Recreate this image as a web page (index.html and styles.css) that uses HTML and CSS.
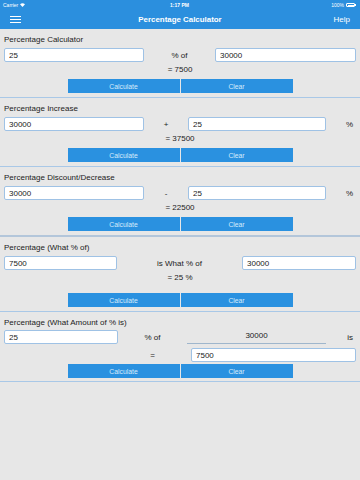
FILE: index.html
```html
<!DOCTYPE html>
<html lang="en">
<head>
    <meta charset="UTF-8">
    <meta name="viewport" content="width=device-width, initial-scale=1.0">
    <title>Percentage Calculator</title>
    <link rel="stylesheet" href="styles.css">
</head>
<body>
    <header class="topbar">
        <div class="status">
            <span class="carrier">Carrier
                <svg class="wifi" width="5" height="4" viewBox="0 0 10 8"><path d="M5 8 L0 2.5 A7.5 7.5 0 0 1 10 2.5 Z" fill="#fff"/></svg>
            </span>
            <span class="clock">1:17 PM</span>
            <span class="battery">100%
                <span class="battery-body"><span class="battery-fill"></span></span><span class="battery-tip"></span>
            </span>
        </div>
        <nav class="nav">
            <span class="menu"><span></span><span></span><span></span></span>
            <span class="nav-title">Percentage Calculator</span>
            <span class="nav-help">Help</span>
        </nav>
    </header>

    <main>
        <section class="calc">
            <div class="calc-title">Percentage Calculator</div>
            <div class="row row-of">
                <input class="field" type="text" value="25">
                <span class="op">% of</span>
                <input class="field" type="text" value="30000">
            </div>
            <div class="result">= 7500</div>
            <div class="buttons">
                <button class="button">Calculate</button>
                <button class="button">Clear</button>
            </div>
        </section>

        <section class="calc">
            <div class="calc-title">Percentage Increase</div>
            <div class="row row-pm">
                <input class="field" type="text" value="30000">
                <span class="op">+</span>
                <input class="field" type="text" value="25">
                <span class="unit">%</span>
            </div>
            <div class="result">= 37500</div>
            <div class="buttons">
                <button class="button">Calculate</button>
                <button class="button">Clear</button>
            </div>
        </section>

        <section class="calc calc-thick">
            <div class="calc-title">Percentage Discount/Decrease</div>
            <div class="row row-pm">
                <input class="field" type="text" value="30000">
                <span class="op">-</span>
                <input class="field" type="text" value="25">
                <span class="unit">%</span>
            </div>
            <div class="result">= 22500</div>
            <div class="buttons">
                <button class="button">Calculate</button>
                <button class="button">Clear</button>
            </div>
        </section>

        <section class="calc">
            <div class="calc-title">Percentage (What % of)</div>
            <div class="row row-what">
                <input class="field" type="text" value="7500">
                <span class="op">is What % of</span>
                <input class="field" type="text" value="30000">
            </div>
            <div class="result result-wide">= 25 %</div>
            <div class="buttons">
                <button class="button">Calculate</button>
                <button class="button">Clear</button>
            </div>
        </section>

        <section class="calc calc-last">
            <div class="calc-title">Percentage (What Amount of % is)</div>
            <div class="row row-amount">
                <input class="field" type="text" value="25">
                <span class="op">% of</span>
                <span class="fixed">30000</span>
                <span class="unit">is</span>
                <span></span>
                <span class="op">=</span>
                <input class="field field-answer" type="text" value="7500">
            </div>
            <div class="buttons buttons-tight">
                <button class="button">Calculate</button>
                <button class="button">Clear</button>
            </div>
        </section>
    </main>
</body>
</html>
```

FILE: styles.css
```css
body {
    font-family: "Liberation Sans", Arial, sans-serif;
    background-color: #e7e7e7;
    color: #222;
    margin: 0;
    padding: 0;
}

/* top bar */
.topbar {
    background-color: #2b8fde;
    color: #fff;
    height: 29px;
}

.status {
    display: flex;
    justify-content: space-between;
    align-items: center;
    height: 10px;
    padding: 0 4px 0 3px;
    font-size: 5px;
}

.carrier {
    display: flex;
    align-items: center;
    gap: 2px;
    width: 60px;
}

.clock {
    font-weight: bold;
}

.battery {
    display: flex;
    align-items: center;
    justify-content: flex-end;
    width: 60px;
}

.battery-body {
    display: inline-block;
    width: 9px;
    height: 4px;
    margin-left: 2px;
    border: 0.5px solid #fff;
    border-radius: 1px;
    padding: 0.5px;
    box-sizing: border-box;
}

.battery-fill {
    display: block;
    height: 100%;
    background: #fff;
}

.battery-tip {
    display: inline-block;
    width: 1px;
    height: 2px;
    background: #fff;
}

.nav {
    display: flex;
    justify-content: space-between;
    align-items: center;
    height: 19px;
    padding: 0 10px 0 10px;
    font-size: 8px;
}

.menu {
    display: flex;
    flex-direction: column;
    gap: 1.3px;
    width: 60px;
}

.menu span {
    display: block;
    width: 11px;
    height: 1.5px;
    background: #fff;
}

.nav-title {
    font-weight: bold;
    font-size: 7.9px;
}

.nav-help {
    width: 60px;
    text-align: right;
}

/* calculators */
.calc {
    padding: 6px 4px 4px;
    border-bottom: 1px solid #a9c8e7;
}

.calc-thick {
    border-bottom: 2px solid #b3c6da;
}

.calc-last {
    padding-bottom: 3px;
}

.calc-title {
    font-size: 8px;
    line-height: 10px;
    margin-bottom: 3px;
}

.calc-last .calc-title {
    margin-bottom: 2px;
}

.row {
    display: grid;
    align-items: center;
    font-size: 8px;
}

.row-of {
    grid-template-columns: 140px 71px 1fr;
}

.row-pm {
    grid-template-columns: 140px 44px 138px 1fr;
}

.row-what {
    grid-template-columns: 113px 125px 1fr;
}

.row-amount {
    grid-template-columns: 114px 69px 139px 1fr;
    row-gap: 4px;
}

.op {
    text-align: center;
}

.unit {
    text-align: right;
    padding-right: 3px;
}

.field {
    box-sizing: border-box;
    height: 14px;
    width: 100%;
    margin: 0;
    padding: 0 4px;
    border: 1px solid #9fc2e5;
    border-radius: 2px;
    background: #fff;
    font-family: inherit;
    font-size: 8px;
    color: #222;
    outline: none;
}

.field-answer {
    grid-column: 3 / 5;
    margin-left: 4px;
    width: calc(100% - 4px);
}

.fixed {
    text-align: center;
    height: 14px;
    line-height: 12px;
    box-sizing: border-box;
    border-bottom: 1px solid #9fb6cc;
}

.result {
    font-size: 8px;
    line-height: 10px;
    text-align: center;
    margin: 3px 0 4px;
}

.result-wide {
    margin-bottom: 10px;
}

.buttons {
    display: flex;
    justify-content: center;
    gap: 1px;
}

.buttons-tight {
    margin-top: 2px;
}

.button {
    width: 112px;
    height: 14px;
    padding: 0;
    font-family: inherit;
    font-size: 6.8px;
    color: #d6ebfb;
    background-color: #2a91e0;
    border: none;
    border-radius: 0;
    cursor: pointer;
}

.button:hover {
    background-color: #1f7fc9;
}
```
